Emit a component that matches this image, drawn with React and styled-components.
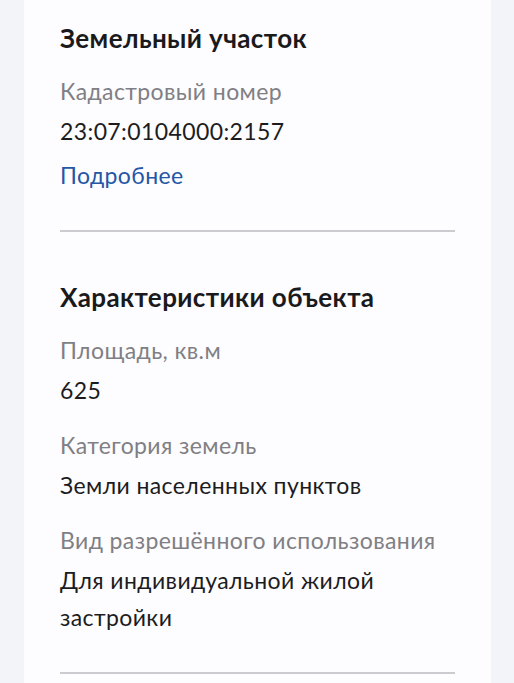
import React from "react";
import styled, { createGlobalStyle } from "styled-components";

const Global = createGlobalStyle`
  html, body { margin: 0; padding: 0; background: #f3f4f9; }
  body { font-family: Lato, "Noto Sans", sans-serif; -webkit-font-smoothing: antialiased; }
`;

const Page = styled.div`
  padding: 0 23px 0 24px;
  min-height: 683px;
  box-sizing: border-box;
`;

const Card = styled.div`
  background: #fdfcfe;
  padding: 22px 36px 40px 36px;
  display: flex;
  flex-direction: column;
`;

const Section = styled.section`
  display: flex;
  flex-direction: column;
  padding-top: ${(p) => (p.$first ? "0" : "49px")};
`;

const Title = styled.h2`
  margin: 0 0 19px;
  font-size: 26px;
  line-height: 32px;
  font-weight: 700;
  letter-spacing: 0.4px;
  color: #1a1a1d;
`;

const Field = styled.div`
  display: flex;
  flex-direction: column;
  & + & { margin-top: 18px; }
`;

const Label = styled.div`
  font-size: 23px;
  line-height: 37px;
  letter-spacing: 0.4px;
  color: #7f7f84;
`;

const Value = styled.div`
  margin-top: 3px;
  font-size: 23px;
  line-height: 37px;
  letter-spacing: 0.4px;
  color: #1c1c1f;
`;

const Link = styled.a`
  margin-top: 7px;
  font-size: 23px;
  line-height: 37px;
  letter-spacing: 0.4px;
  color: #2457a6;
  text-decoration: none;
  align-self: flex-start;
`;

const Divider = styled.hr`
  margin: 36px 0 0;
  border: 0;
  height: 2px;
  background: #cbcbd0;
`;

export default function App() {
  return (
    <>
      <Global />
      <Page>
        <Card>
          <Section $first>
            <Title>Земельный участок</Title>
            <Field>
              <Label>Кадастровый номер</Label>
              <Value>23:07:0104000:2157</Value>
            </Field>
            <Link href="#">Подробнее</Link>
            <Divider />
          </Section>
          <Section>
            <Title>Характеристики объекта</Title>
            <Field>
              <Label>Площадь, кв.м</Label>
              <Value>625</Value>
            </Field>
            <Field>
              <Label>Категория земель</Label>
              <Value>Земли населенных пунктов</Value>
            </Field>
            <Field>
              <Label>Вид разрешённого использования</Label>
              <Value>Для индивидуальной жилой<br />застройки</Value>
            </Field>
            <Divider />
          </Section>
        </Card>
      </Page>
    </>
  );
}
